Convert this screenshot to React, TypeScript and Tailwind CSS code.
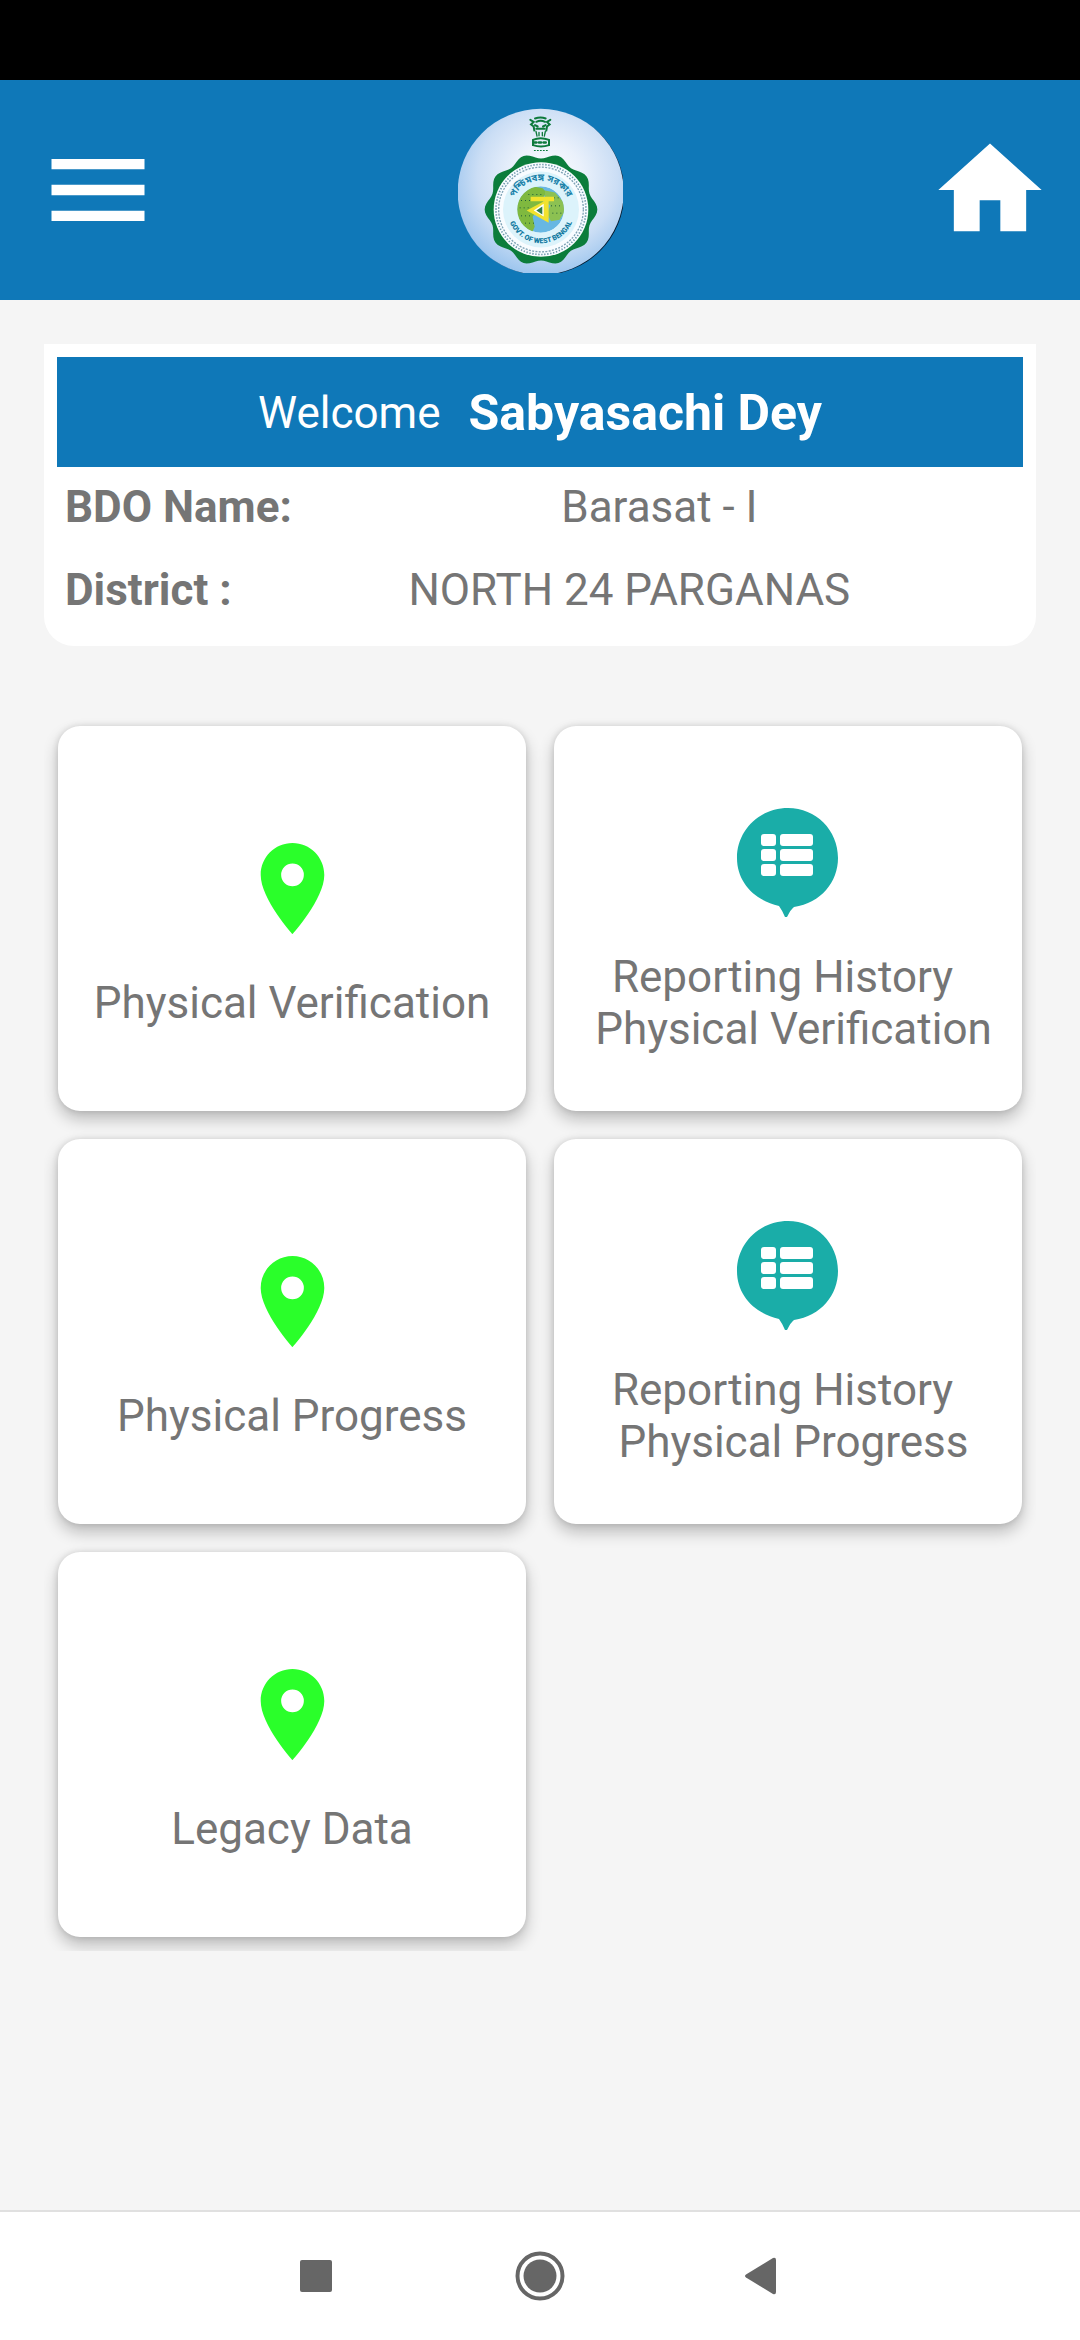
import React from "react";

function scallop(cx: number, cy: number, base: number, depth: number, lobes: number) {
  const points: string[] = [];
  for (let i = 0; i < 360; i += 3) {
    const a = (i * Math.PI) / 180;
    const r = base + depth * Math.cos(lobes * a);
    points.push(`${(cx + r * Math.cos(a)).toFixed(1)} ${(cy + r * Math.sin(a)).toFixed(1)}`);
  }
  return `M${points.join("L")}Z`;
}

function Emblem() {
  return (
    <svg className="size-[165px]" viewBox="51 53 495 494" role="img" aria-label="Government of West Bengal">
      <defs>
        <radialGradient id="disc" gradientUnits="userSpaceOnUse" cx="320" cy="260" r="300">
          <stop offset="0" stopColor="#ffffff" />
          <stop offset="0.35" stopColor="#eaf1fb" />
          <stop offset="0.7" stopColor="#cbdef5" />
          <stop offset="1" stopColor="#9cc5ee" />
        </radialGradient>
        <clipPath id="globe">
          <circle cx="299" cy="357" r="70" />
        </clipPath>
        <path id="arcTop" d="M213 357A87 87 0 0 1 387 357" />
        <path id="arcBottom" d="M199 357A101 101 0 0 0 401 357" />
      </defs>
      <circle cx="302" cy="306" r="248" fill="#04182c" />
      <circle cx="299" cy="304" r="249" fill="url(#disc)" />

      <g fill="none" stroke="#0d7a3c" strokeWidth="6" strokeLinecap="round">
        <path d="M268 88l10 6-8 8 8 6 2 12M328 88l-10 6 8 8-8 6-2 12" />
        <path d="M282 84q17-6 32 0M286 94q13-6 26 0M282 104l8 4M314 104l-8 4M286 115h25" />
        <path d="M285 123l3 14M313 123l-3 14M294 126v10M304 126v10" strokeWidth="4" />
        <path d="M276 148q22-10 48 0v16q-24 8-48 0z" />
        <path d="M280 156h40" strokeWidth="8" strokeDasharray="6 8" />
        <path d="M280 180h45" strokeWidth="3" strokeDasharray="3 6" />
      </g>

      <path d={scallop(300, 357, 161, 8, 10)} fill="#0b7d3b" />
      <circle cx="300" cy="357" r="142" fill="#f8fcff" />
      <circle cx="300" cy="357" r="135" fill="none" stroke="#6d97ac" strokeWidth="5" strokeDasharray="4 5" />
      <circle cx="300" cy="357" r="127" fill="none" stroke="#7fa3b6" strokeWidth="4" strokeDasharray="6 4" />
      <circle cx="300" cy="357" r="114" fill="#dcf3fb" />

      <g clipPath="url(#globe)">
        <circle cx="299" cy="357" r="70" fill="#67b7e3" />
        <path d="M225 340l20-35 30-18 30 6 12 14-14 18 8 22-22 12-14 20 6 30-10 22-44-30z" fill="#7fb93f" />
        <path d="M312 300l30 6 26 30 2 28-14 24-26 4-12-22 10-24-16-18z" fill="#8cc152" />
        <path
          d="M240 330h50M236 352h28M240 376h34M262 312h40M252 398h28M326 322h34M330 346h36M334 368h30"
          fill="none"
          stroke="#1f5d38"
          strokeWidth="3"
          strokeDasharray="3 9"
        />
      </g>
      <path d="M269 319h70v13h-16v65l-66-37 52-28h-40z" fill="#f2e22e" />
      <path d="M308 340v38l-30-18z" fill="#ffffff" />
      <path d="M304 348v24l-18-12z" fill="#2f7d46" />

      <text fill="#1780a8" fontSize="28" fontWeight="700" fontFamily='"Noto Sans Bengali", "Noto Sans", sans-serif'>
        <textPath href="#arcTop" startOffset="50%" textAnchor="middle">
          পশ্চিমবঙ্গ সরকার
        </textPath>
      </text>
      <text fill="#0f78a0" fontSize="21" fontWeight="900" fontFamily='Roboto, "Liberation Sans", sans-serif'>
        <textPath href="#arcBottom" startOffset="50%" textAnchor="middle">
          GOVT. OF WEST BENGAL
        </textPath>
      </text>
    </svg>
  );
}

function PinIcon() {
  return (
    <svg className="size-[109px]" viewBox="0 0 24 24" fill="#2aff2a" aria-hidden="true">
      <path d="M12 2C8.13 2 5 5.13 5 9c0 5.25 7 13 7 13s7-7.75 7-13c0-3.87-3.13-7-7-7zm0 9.5a2.5 2.5 0 0 1 0-5 2.5 2.5 0 0 1 0 5z" />
    </svg>
  );
}

function ReportIcon() {
  return (
    <svg className="size-[109px]" viewBox="0 0 109 109" aria-hidden="true">
      <path
        d="M54 0C82 0 104 22 104 50C104 74 87 95 60 99Q57 101 53 109H51Q48 102 45 98C20 92 3 74 3 50C3 22 26 0 54 0Z"
        fill="#1aada8"
      />
      <g fill="#ffffff">
        <rect x="27" y="26" width="15" height="12" rx="3" />
        <rect x="46" y="26" width="33" height="12" rx="3" />
        <rect x="27" y="41" width="15" height="12" rx="3" />
        <rect x="46" y="41" width="33" height="12" rx="3" />
        <rect x="27" y="56" width="15" height="12" rx="3" />
        <rect x="46" y="56" width="33" height="12" rx="3" />
      </g>
    </svg>
  );
}

const tiles = [
  { label: "Physical Verification", icon: "pin" },
  { label: "Reporting History \n Physical Verification", icon: "report" },
  { label: "Physical Progress", icon: "pin" },
  { label: "Reporting History \n Physical Progress", icon: "report" },
  { label: "Legacy Data", icon: "pin" },
];

const details = [
  { label: "BDO Name:", value: "Barasat - I" },
  { label: "District :", value: "NORTH 24 PARGANAS" },
];

export default function App() {
  return (
    <div className="flex min-h-screen flex-col bg-[#f5f5f5] font-[Roboto,'Noto_Sans',sans-serif] text-[44px] leading-[52px] text-[#757575]">
      <div className="h-20 bg-black" />
      <header className="grid h-[220px] grid-cols-[1fr_auto_1fr] items-center bg-[#0f78b8] pr-7 pl-7">
        <button type="button" aria-label="Menu" className="ml-2 justify-self-start text-white">
          <svg className="size-[124px]" viewBox="0 0 24 24" fill="currentColor" aria-hidden="true">
            <path d="M3 18h18v-2H3v2zm0-5h18v-2H3v2zm0-7v2h18V6H3z" />
          </svg>
        </button>
        <Emblem />
        <button type="button" aria-label="Home" className="justify-self-end text-white">
          <svg className="size-[124px]" viewBox="0 0 24 24" fill="currentColor" aria-hidden="true">
            <path d="M10 20v-6h4v6h5v-8h3L12 3 2 12h3v8z" />
          </svg>
        </button>
      </header>

      <main className="flex flex-1 flex-col px-11 pt-11">
        <section className="rounded-b-[30px] bg-white p-[13px]">
          <h1 className="flex h-[110px] items-center justify-center gap-7 bg-[#0f78b8] pt-0.5 text-white">
            <span className="font-normal">Welcome</span>
            <span className="text-[50px] font-bold">Sabyasachi Dey</span>
          </h1>
          <dl>
            {details.map((row) => (
              <div key={row.label} className="flex pt-3.5 pb-[17px] pl-2">
                <dt className="pr-1 font-bold">{row.label}</dt>
                <dd className="flex-1 text-center">{row.value}</dd>
              </div>
            ))}
          </dl>
        </section>

        <div className="mt-[66px] grid grid-cols-2 gap-7 overflow-hidden p-3.5">
          {tiles.map((tile) => (
            <button
              key={tile.label}
              type="button"
              className="flex h-[385px] flex-col items-center justify-center gap-[34px] rounded-[22px] bg-white pt-[26px] shadow-[0_8px_16px_rgba(0,0,0,0.24),0_0_6px_rgba(0,0,0,0.12)]"
            >
              {tile.icon === "pin" ? <PinIcon /> : <ReportIcon />}
              <span className="whitespace-pre">{tile.label}</span>
            </button>
          ))}
        </div>
      </main>

      <nav className="flex h-[130px] items-center justify-center border-t-2 border-[#e0e0e0] bg-white text-[#666666]">
        <button type="button" aria-label="Recent apps" className="flex w-56 justify-center">
          <svg className="size-[50px]" viewBox="0 0 50 50" fill="currentColor" aria-hidden="true">
            <rect x="9" y="9" width="32" height="32" rx="2" />
          </svg>
        </button>
        <button type="button" aria-label="Home screen" className="flex w-56 justify-center">
          <svg className="size-[50px]" viewBox="0 0 50 50" fill="currentColor" aria-hidden="true">
            <circle cx="25" cy="25" r="22.5" fill="none" stroke="currentColor" strokeWidth="4" />
            <circle cx="25" cy="25" r="16.5" />
          </svg>
        </button>
        <button type="button" aria-label="Back" className="flex w-56 justify-center">
          <svg className="size-[50px]" viewBox="0 0 50 50" fill="currentColor" aria-hidden="true">
            <path d="M7 23.500L34 7q3-1 3 2v32q0 3-3 2L7 26.500q-2-1.500 0-3z" />
          </svg>
        </button>
      </nav>
    </div>
  );
}
